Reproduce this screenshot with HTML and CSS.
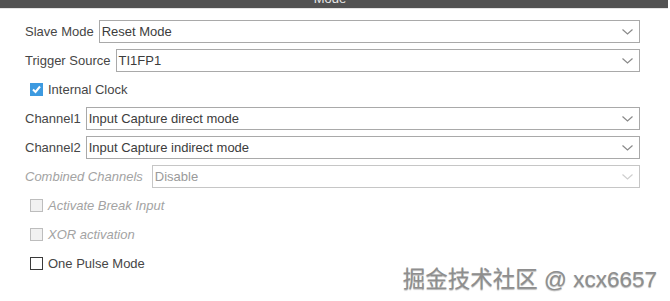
FILE: index.html
```html
<!DOCTYPE html>
<html lang="en">
<head>
  <meta http-equiv="Content-Type" content="text/html; charset=UTF-8">
  <title>Mode</title>
  <link rel="stylesheet" href="styles.css">
</head>
<body>
  <div class="page">
    <div class="title-bar"><span class="title">Mode</span></div>
    <div class="panel">
      <div class="row">
        <span class="label">Slave Mode</span>
        <div class="combo">
          <span>Reset Mode</span>
          <svg class="chevron" width="11" height="6" viewBox="0 0 11 6"><polyline points="0.5,0.5 5.5,5 10.5,0.5" /></svg>
        </div>
      </div>
      <div class="row">
        <span class="label">Trigger Source</span>
        <div class="combo">
          <span>TI1FP1</span>
          <svg class="chevron" width="11" height="6" viewBox="0 0 11 6"><polyline points="0.5,0.5 5.5,5 10.5,0.5" /></svg>
        </div>
      </div>
      <div class="row check-row">
        <span class="box checked">
          <svg width="13" height="13" viewBox="0 0 13 13"><polyline points="3,6.5 5.5,9 10,3.5" /></svg>
        </span>
        <span>Internal Clock</span>
      </div>
      <div class="row">
        <span class="label">Channel1</span>
        <div class="combo">
          <span>Input Capture direct mode</span>
          <svg class="chevron" width="11" height="6" viewBox="0 0 11 6"><polyline points="0.5,0.5 5.5,5 10.5,0.5" /></svg>
        </div>
      </div>
      <div class="row">
        <span class="label">Channel2</span>
        <div class="combo">
          <span>Input Capture indirect mode</span>
          <svg class="chevron" width="11" height="6" viewBox="0 0 11 6"><polyline points="0.5,0.5 5.5,5 10.5,0.5" /></svg>
        </div>
      </div>
      <div class="row disabled">
        <span class="label wide">Combined Channels</span>
        <div class="combo">
          <span>Disable</span>
          <svg class="chevron" width="11" height="6" viewBox="0 0 11 6"><polyline points="0.5,0.5 5.5,5 10.5,0.5" /></svg>
        </div>
      </div>
      <div class="row check-row disabled">
        <span class="box"></span>
        <span class="label">Activate Break Input</span>
      </div>
      <div class="row check-row disabled">
        <span class="box"></span>
        <span class="label">XOR activation</span>
      </div>
      <div class="row check-row">
        <span class="box"></span>
        <span>One Pulse Mode</span>
      </div>
    </div>
    <div class="watermark">掘金技术社区 @ xcx6657</div>
  </div>
</body>
</html>
```
FILE: styles.css
```css
body {
  margin: 0;
  background: #fff;
  font-family: "Liberation Sans", Arial, sans-serif;
  font-size: 13px;
  color: #464646;
}
.page {
  position: relative;
  width: 670px;
  height: 301px;
  overflow: hidden;
}
.title-bar {
  width: 668px;
  height: 8px;
  background: #525252;
  border-bottom: 1px solid #e4e4e4;
  overflow: hidden;
  text-align: center;
}
.title {
  display: block;
  margin-top: -9px;
  padding-right: 8px;
  line-height: 16px;
  color: #e8e8e8;
}
.panel {
  padding: 8px 30px 0 25px;
}
.row {
  display: flex;
  align-items: center;
  height: 29px;
  gap: 5px;
}
.label {
  white-space: nowrap;
}
.label.wide {
  margin-right: 4px;
}
.combo {
  flex: 1;
  display: flex;
  align-items: center;
  justify-content: space-between;
  height: 23px;
  box-sizing: border-box;
  padding: 0 6px 0 2px;
  border: 1px solid #a9a9a9;
  background: #fff;
  color: #3c3c3c;
}
.chevron polyline {
  fill: none;
  stroke: #8a8a8a;
  stroke-width: 1.2;
}
.disabled .label {
  font-style: italic;
  color: #a3a3a3;
}
.disabled .combo {
  border-color: #c6c6c6;
  color: #9a9a9a;
}
.disabled .chevron polyline {
  stroke: #cfcfcf;
}
.check-row {
  padding-left: 5px;
}
.box {
  width: 13px;
  height: 13px;
  box-sizing: border-box;
  border: 1px solid #3a3a3a;
  background: #fff;
  flex: none;
}
.box svg {
  display: block;
  margin: -1px;
}
.box.checked {
  border-color: #3d9ae0;
  background: #3d9ae0;
}
.box.checked polyline {
  fill: none;
  stroke: #fff;
  stroke-width: 2;
}
.disabled .box {
  border-color: #bdbdbd;
  background: #f1f1f1;
}
.watermark {
  position: absolute;
  right: 13px;
  top: 261px;
  font-family: "Liberation Sans", "Noto Sans CJK SC", sans-serif;
  font-size: 22.5px;
  color: #8e8e8e;
  text-shadow: 0 1px 1px rgba(0, 0, 0, 0.3);
  white-space: nowrap;
}
```
